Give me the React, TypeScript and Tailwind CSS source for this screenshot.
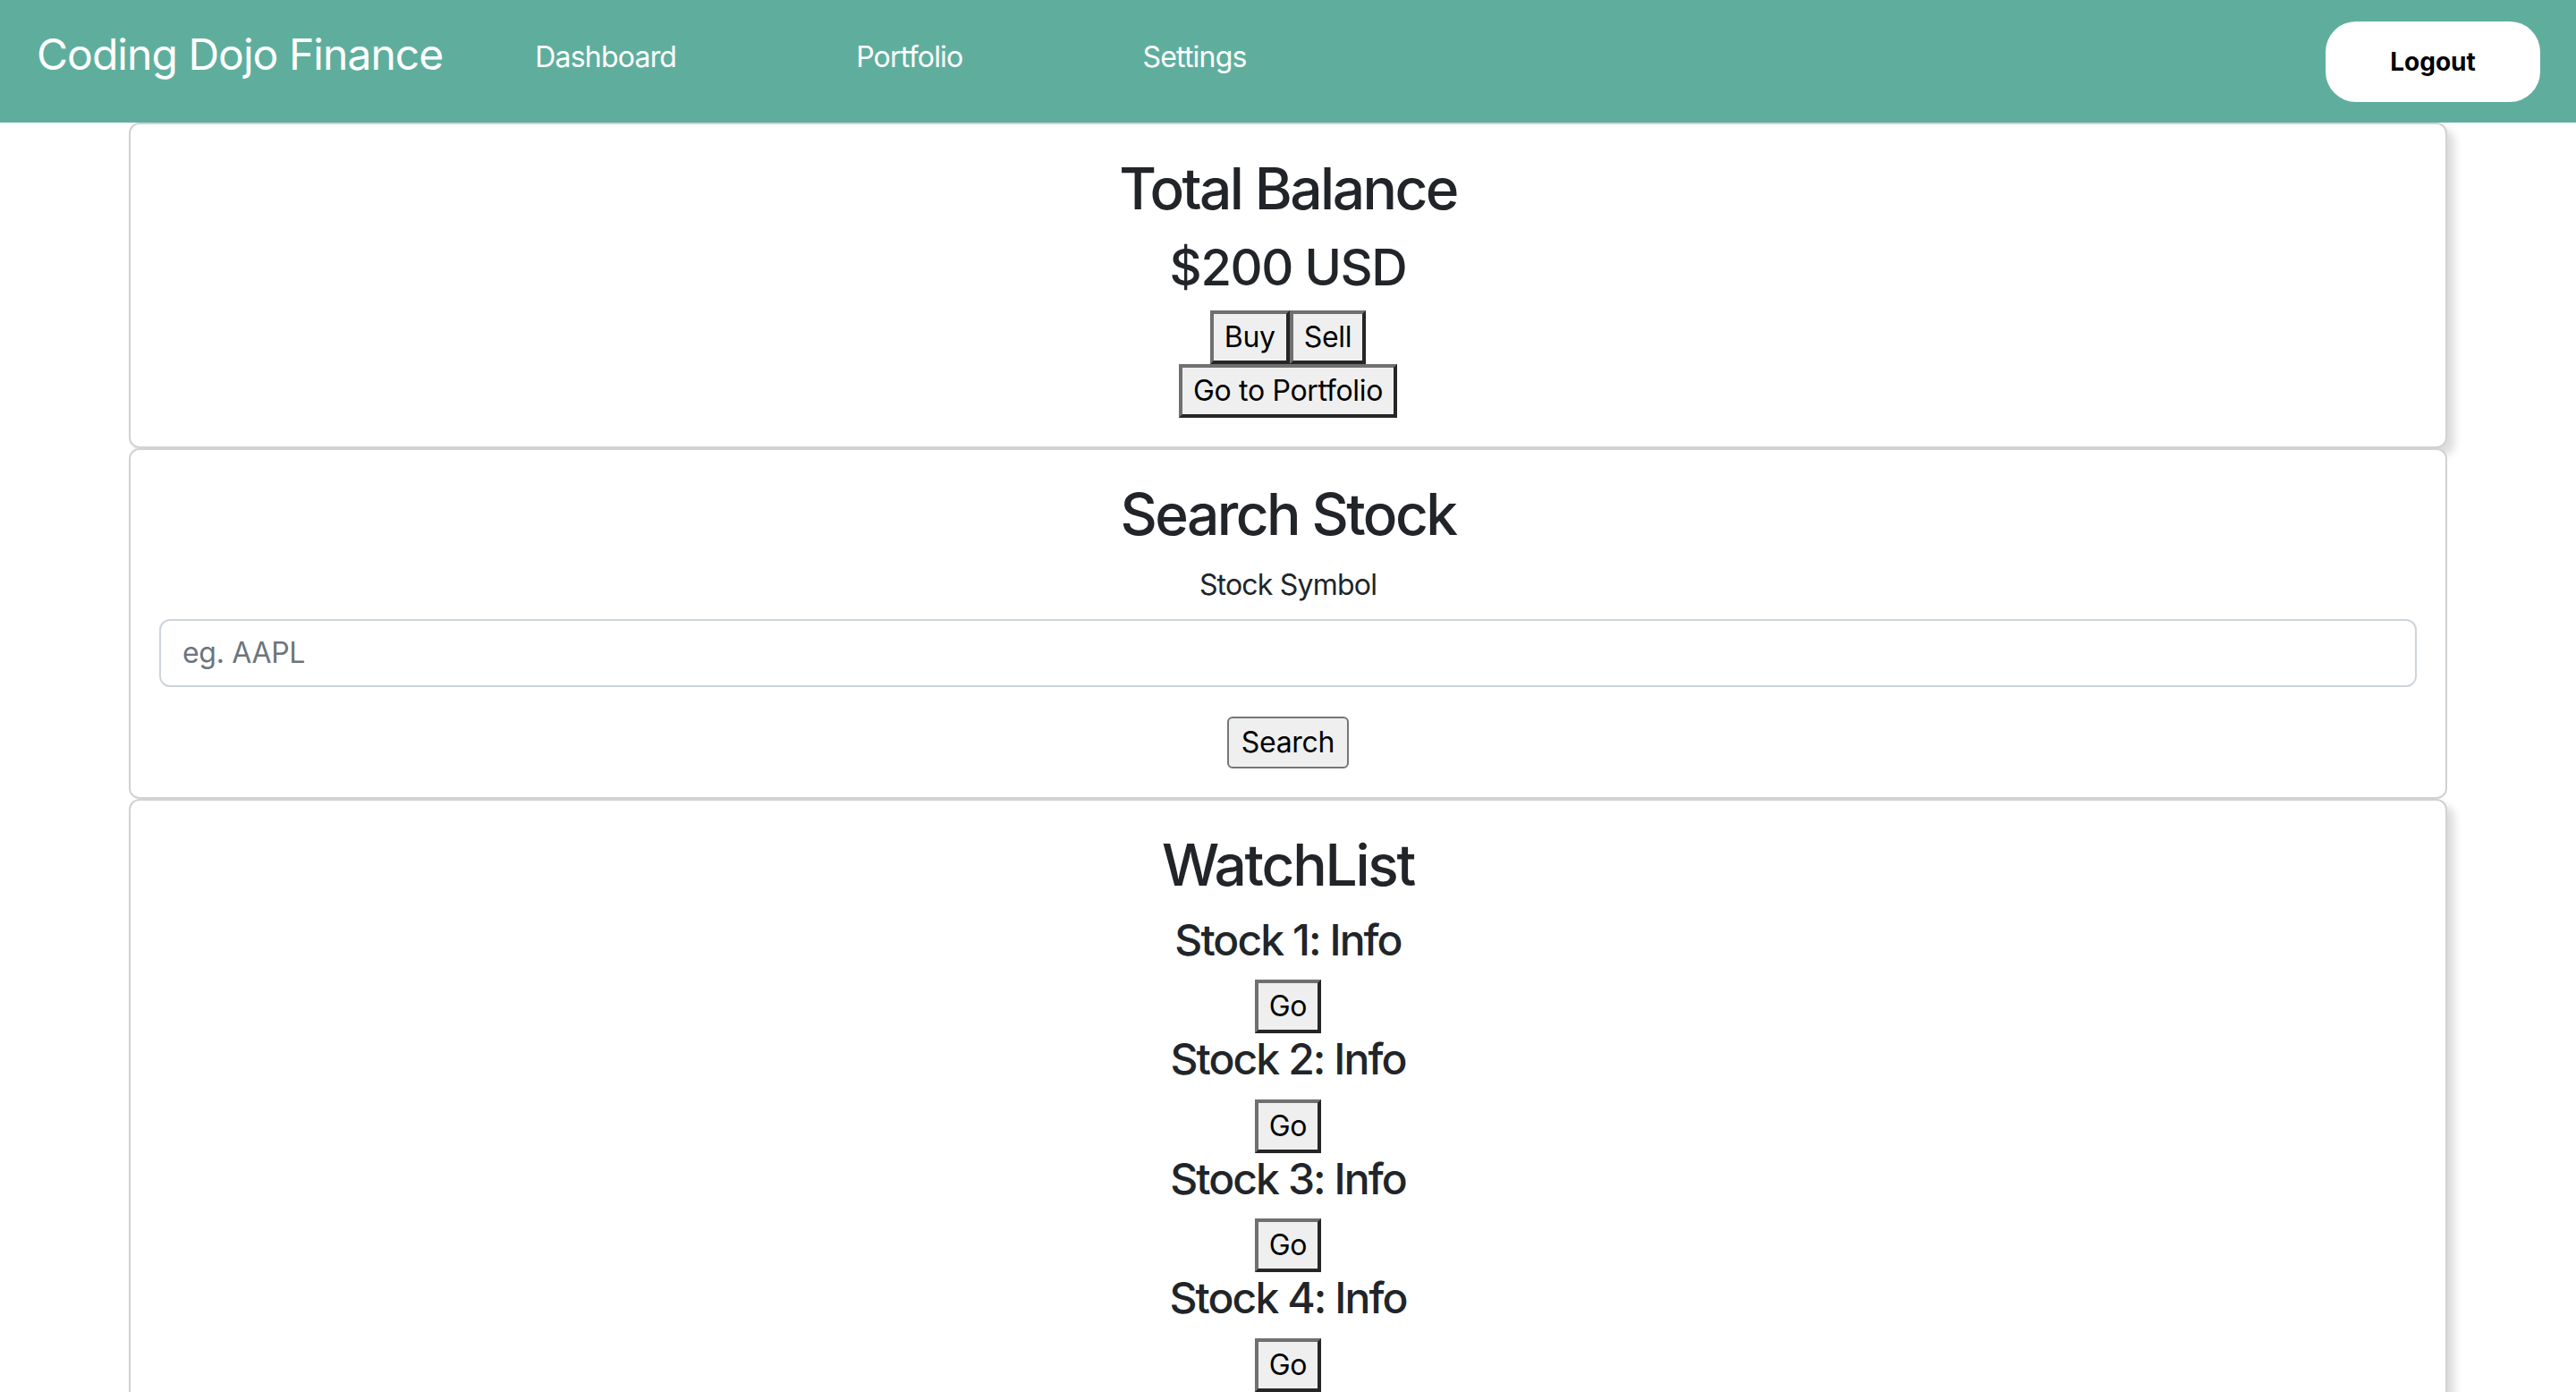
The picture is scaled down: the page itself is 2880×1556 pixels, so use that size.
import { ReactNode } from "react";

const stocks = ["Stock 1: Info", "Stock 2: Info", "Stock 3: Info", "Stock 4: Info"];

// old-school outset buttons used on the dashboard
function OutsetButton({ children }: { children: ReactNode }) {
  return (
    <button className="border-4 border-solid border-t-[#707070] border-l-[#707070] border-r-[#262626] border-b-[#262626] bg-[#efefef] px-[12px] py-[2px] text-[32px] leading-[48px] tracking-[-0.01em] text-black">
      {children}
    </button>
  );
}

function Card({ children, shadow }: { children: ReactNode; shadow?: boolean }) {
  return (
    <section
      className={
        shadow
          ? "rounded-[12px] border-2 border-[rgba(0,0,0,0.175)] bg-white p-[32px] text-center shadow-[8px_8px_10px_rgba(0,0,0,0.14)]"
          : "rounded-[12px] border-2 border-[rgba(0,0,0,0.175)] bg-white p-[32px] text-center"
      }
    >
      {children}
    </section>
  );
}

export default function App() {
  return (
    <div className="min-h-screen bg-white font-[Inter,'Liberation_Sans',sans-serif] tracking-[-0.02em] text-[#212529]">
      {/* Top navbar */}
      <nav className="flex h-[137px] items-center bg-[#5fae9d] pl-[41px] pr-[40px]">
        <a href="#" className="mb-[16px] text-[48px] leading-none tracking-[-0.02em] text-white">
          Coding Dojo Finance
        </a>
        <ul className="mb-[10px] ml-[103px] flex gap-[201px] text-[32px] leading-none tracking-[-0.025em] text-white">
          <li>Dashboard</li>
          <li>Portfolio</li>
          <li>Settings</li>
        </ul>
        <button className="ml-auto h-[90px] w-[240px] rounded-[34px] bg-white text-[28px] font-bold tracking-normal text-black">
          Logout
        </button>
      </nav>

      <main className="mx-auto w-[90%]">
        {/* Balance */}
        <Card shadow>
          <h2 className="mb-[16px] pt-[2px] text-[64px] font-medium leading-[1.2] tracking-[-0.04em]">Total Balance</h2>
          <h3 className="mb-[14px] text-[56px] font-medium leading-[1.2] tracking-[-0.025em]">$200 USD</h3>
          <div className="flex justify-center">
            <OutsetButton>Buy</OutsetButton>
            <OutsetButton>Sell</OutsetButton>
          </div>
          <div className="flex justify-center">
            <OutsetButton>Go to Portfolio</OutsetButton>
          </div>
        </Card>

        {/* Search */}
        <Card>
          <h2 className="mb-[16px] pt-[2px] text-[64px] font-medium leading-[1.2] tracking-[-0.04em]">Search Stock</h2>
          <label htmlFor="symbol" className="mb-[14px] block text-[32px] leading-[48px] tracking-[-0.025em]">
            Stock Symbol
          </label>
          <input
            id="symbol"
            placeholder="eg. AAPL"
            className="h-[76px] w-full rounded-[12px] border-2 border-[#ced4da] bg-white px-[24px] text-[32px] text-[#212529] outline-none placeholder:text-[#6c757d]"
          />
          <div className="mt-[33px] flex justify-center">
            <button className="rounded-[6px] border-2 border-[#767676] bg-[#efefef] px-[14px] py-[3px] text-[32px] leading-[48px] tracking-[-0.01em] text-black">
              Search
            </button>
          </div>
        </Card>

        {/* Watchlist */}
        <Card shadow>
          <h2 className="mb-[16px] pt-[2px] text-[64px] font-medium leading-[1.2] tracking-[-0.035em]">WatchList</h2>
          {stocks.map((s) => (
            <div key={s} className="flex flex-col items-center">
              <h4 className="mb-[16px] text-[48px] font-medium leading-[1.2] tracking-[-0.04em]">{s}</h4>
              <OutsetButton>Go</OutsetButton>
            </div>
          ))}
        </Card>
      </main>
    </div>
  );
}
